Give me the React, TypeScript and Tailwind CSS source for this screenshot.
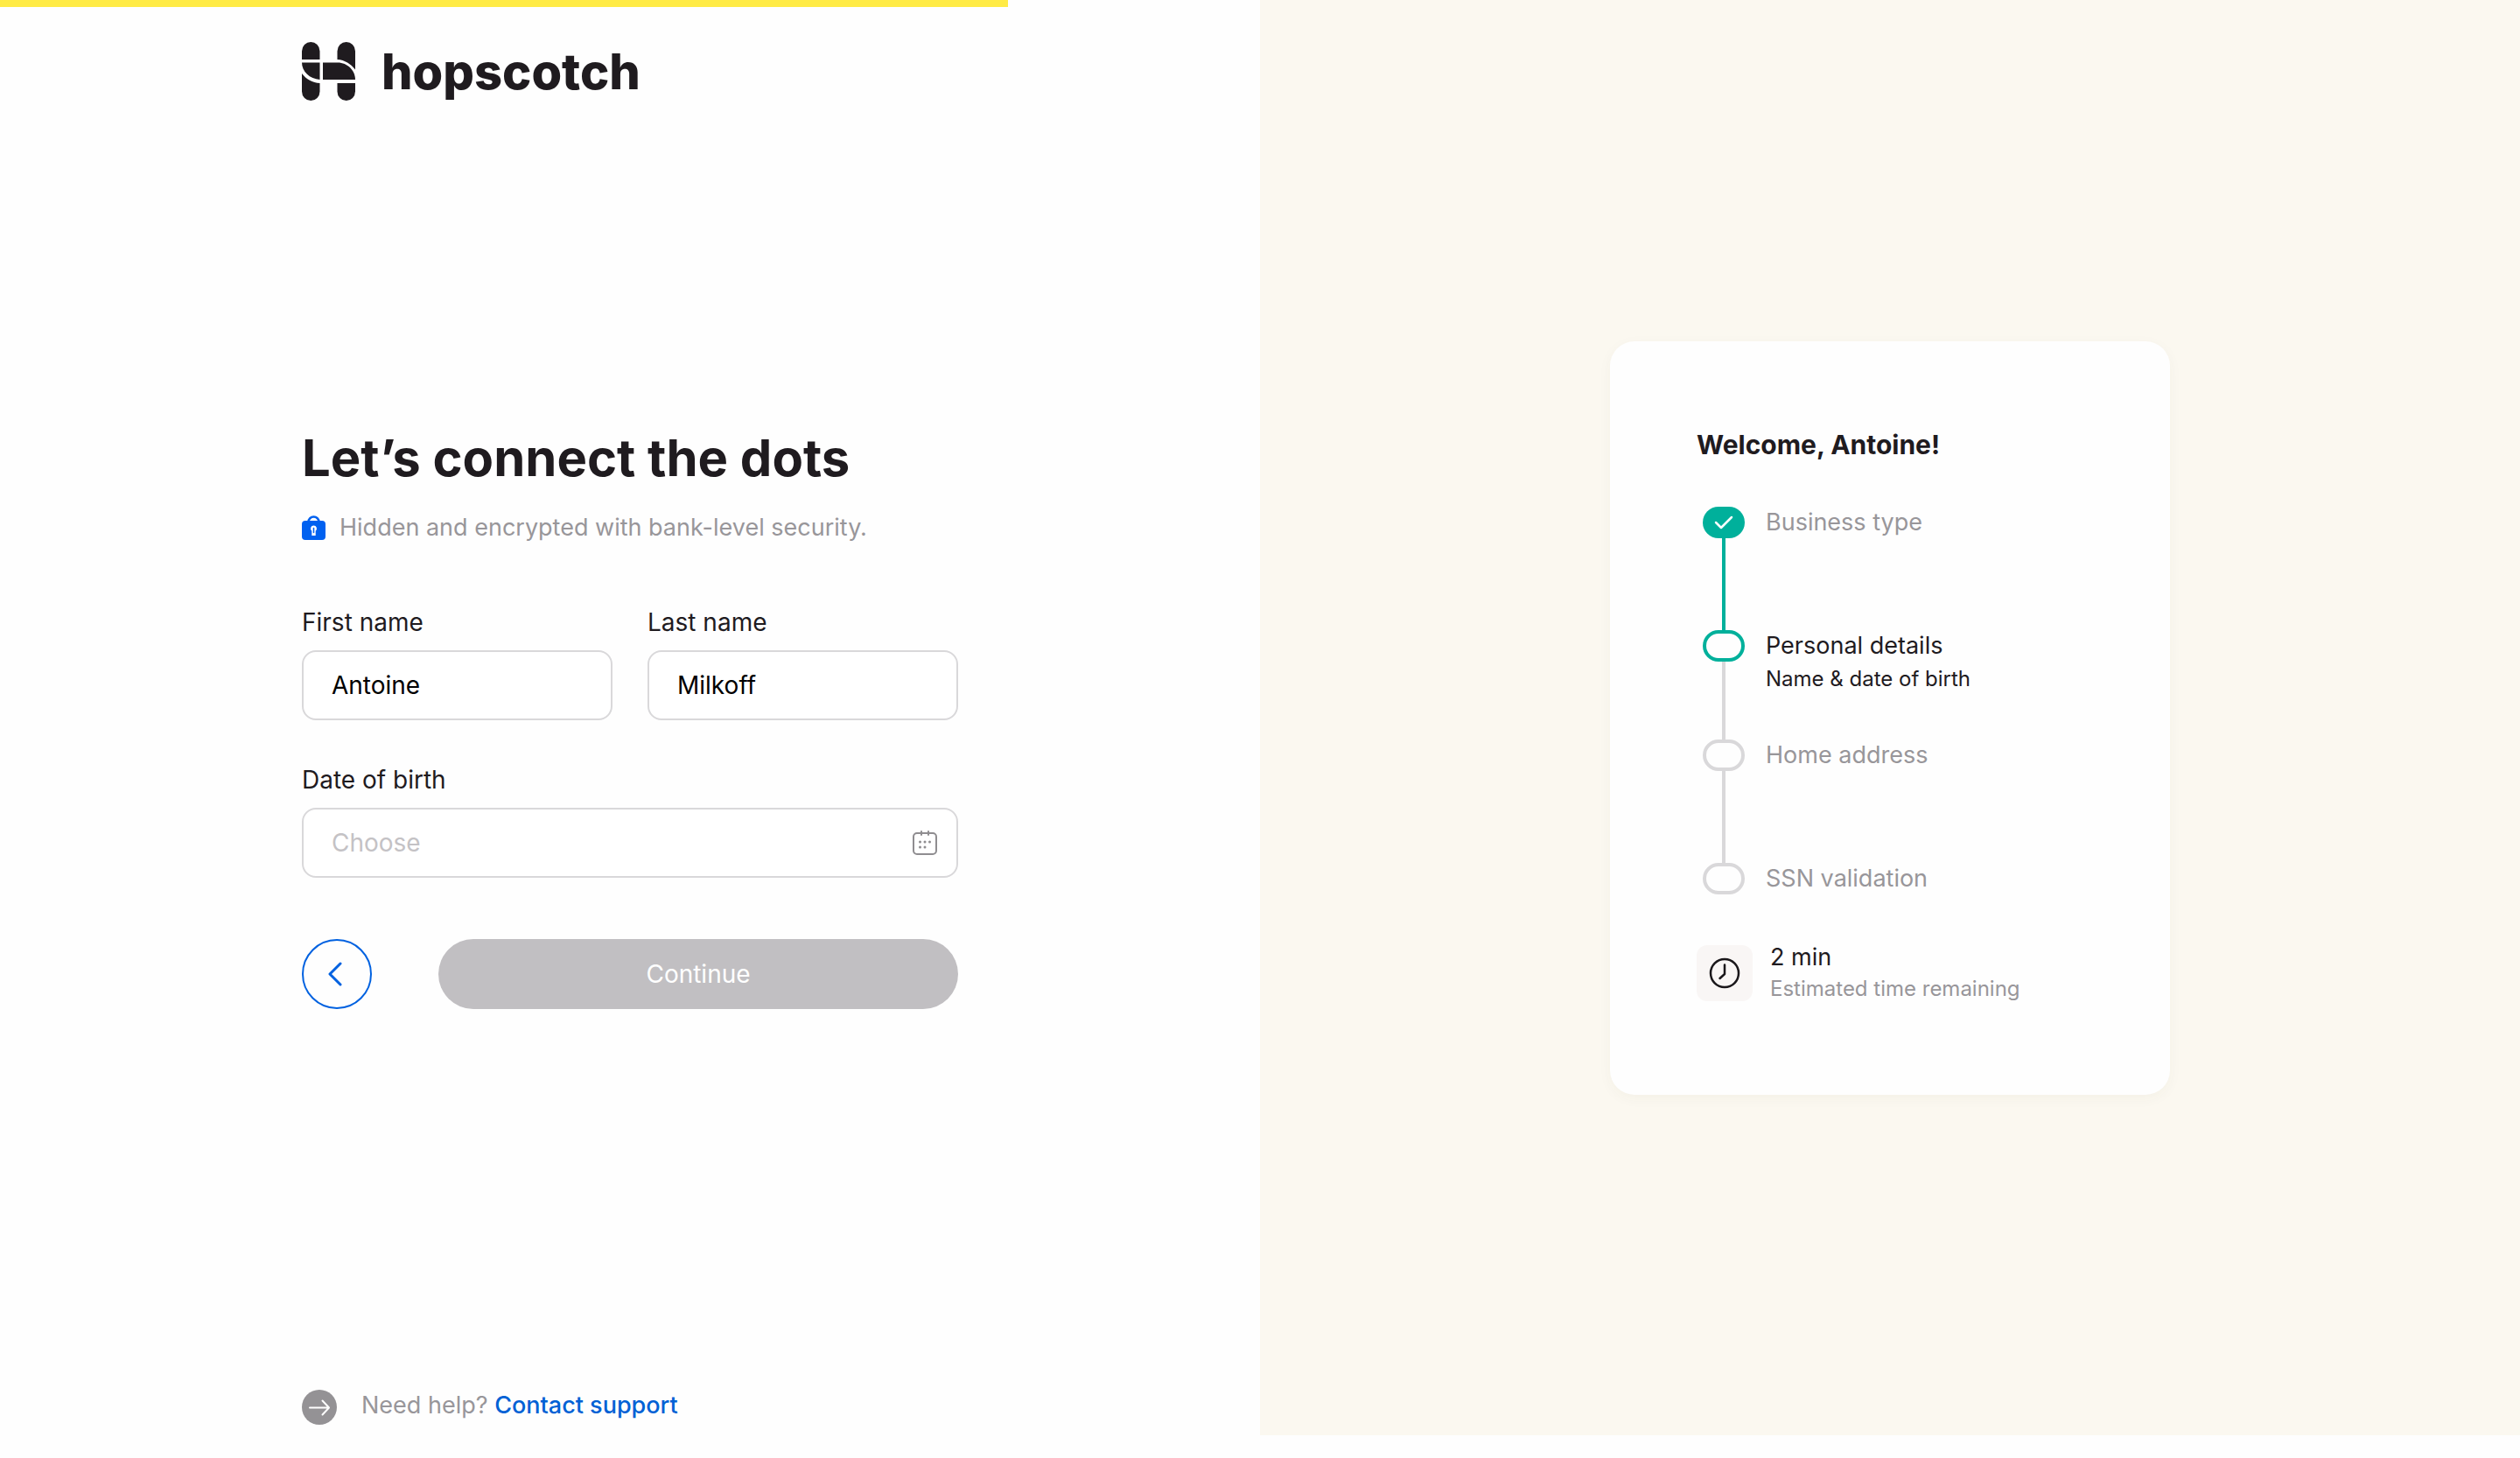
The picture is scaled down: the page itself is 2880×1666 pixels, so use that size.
import { useId, useState } from 'react';
import type { ReactNode } from 'react';

type StepState = 'done' | 'current' | 'upcoming';

interface Step {
  label: string;
  detail?: string;
  state: StepState;
}

const STEPS: Step[] = [
  { label: 'Business type', state: 'done' },
  { label: 'Personal details', detail: 'Name & date of birth', state: 'current' },
  { label: 'Home address', state: 'upcoming' },
  { label: 'SSN validation', state: 'upcoming' },
];

const PROGRESS = 40;

function LogoMark() {
  return (
    <svg viewBox="0 0 61 67" className="h-[67px] w-[61px]" fill="#1f1b1f" aria-hidden="true">
      <path d="M0 20V10.5a10.25 10.5 0 0 1 20.5 0V20Z" />
      <path d="M40.5 20V10.5a10.25 10.5 0 0 1 20.5 0V31.5C56 25 49 20.5 40.5 20Z" />
      <path d="M0 23.5h20.5V43C9 42 0 34 0 23.500Z" />
      <path d="M24 23.500H41c11 0 20 9 20 19.500H24Z" />
      <path d="M0 36c5 6.500 12 10.500 20.500 11v9.500a10.250 10.500 0 0 1-20.500 0Z" />
      <path d="M40.500 47H61v9.500a10.250 10.500 0 0 1-20.500 0Z" />
    </svg>
  );
}

function LockIcon() {
  return (
    <svg viewBox="0 0 27 30" className="h-[30px] w-[27px] shrink-0" aria-hidden="true">
      <path d="M7.500 8.500a6 6 0 0 1 12 0" fill="none" stroke="#0061f0" strokeWidth="2.500" />
      <rect x="0" y="7" width="27" height="22" rx="4" fill="#0061f0" />
      <path d="M13.500 12.500a3.500 3.500 0 0 0-2.200 6.200V24h4.400v-5.300a3.500 3.500 0 0 0-2.200-6.200Z" fill="#fff" />
      <path d="M13.500 15.500v5" stroke="#0061f0" strokeWidth="1.500" strokeLinecap="round" />
    </svg>
  );
}

function CalendarIcon() {
  return (
    <svg viewBox="0 0 28 28" className="h-7 w-7" fill="none" stroke="#8f8d90" strokeWidth="2" strokeLinecap="round" aria-hidden="true">
      <rect x="1" y="3" width="26" height="24" rx="4" />
      <path d="M10 1v4M18 1v4" />
      <path d="M8.500 13h.01M14 13h.01M19.500 13h.01M8.500 19h.01M14 19h.01" strokeWidth="3" />
    </svg>
  );
}

function Field({ label, value, placeholder, icon }: {
  label: string;
  value?: string;
  placeholder?: string;
  icon?: ReactNode;
}) {
  const id = useId();
  const [text, setText] = useState(value ?? '');

  return (
    <div className="flex min-w-0 flex-1 flex-col gap-3">
      <label htmlFor={id} className="text-[28px] leading-10">{label}</label>
      <div className="relative">
        <input
          id={id}
          value={text}
          placeholder={placeholder}
          onChange={(e) => setText(e.target.value)}
          className="h-20 w-full rounded-2xl border-2 border-[#d9d8da] bg-white px-8 text-[28px] text-black placeholder:text-[#c4c2c5]"
        />
        {icon && <span className="absolute inset-y-0 right-6 flex items-center">{icon}</span>}
      </div>
    </div>
  );
}

function StepMarker({ state }: { state: StepState }) {
  if (state === 'done') {
    return (
      <span className="flex h-9 w-12 shrink-0 items-center justify-center rounded-full bg-[#00b09b]">
        <svg viewBox="0 0 22 16" className="h-4 w-[22px]" fill="none" stroke="#fff" strokeWidth="2.500" strokeLinecap="round" strokeLinejoin="round" aria-hidden="true">
          <path d="M2 8l6 6L20 2" />
        </svg>
      </span>
    );
  }
  return (
    <span
      className={
        state === 'current'
          ? 'h-9 w-12 shrink-0 rounded-full border-4 border-[#00b09b]'
          : 'h-9 w-12 shrink-0 rounded-full border-4 border-[#d9d8da]'
      }
    />
  );
}

function StepItem({ step, last }: { step: Step; last: boolean }) {
  return (
    <li className="flex gap-6">
      <div className="flex flex-col items-center">
        <StepMarker state={step.state} />
        {!last && (
          <span className={step.state === 'done' ? 'w-1 flex-1 bg-[#00b09b]' : 'w-1 flex-1 bg-[#d9d8da]'} />
        )}
      </div>
      <div className={last ? '' : step.detail ? 'pb-[49px]' : 'pb-[105px]'}>
        <p className={step.state === 'current' ? 'text-[27px] leading-9' : 'text-[27px] leading-9 text-[#98969a]'}>
          {step.label}
        </p>
        {step.detail && <p className="text-2xl leading-10">{step.detail}</p>}
      </div>
    </li>
  );
}

export default function App() {
  return (
    <div className="relative flex min-h-screen bg-[#fefefe] font-['Inter','Liberation_Sans',sans-serif] text-[#1f1b1f]">
      <div
        role="progressbar"
        aria-label="Onboarding progress"
        aria-valuenow={PROGRESS}
        className="absolute top-0 left-0 h-2 bg-[#ffeb45]"
        style={{ width: `${PROGRESS}%` }}
      />

      <main className="flex w-1/2 flex-col px-[345px] pt-12 pb-[38px]">
        <header className="flex items-start gap-[30px]">
          <LogoMark />
          <span className="text-[56px] leading-[68px] font-extrabold">hopscotch</span>
        </header>

        <form className="my-auto flex flex-col pb-16" onSubmit={(e) => e.preventDefault()}>
          <h1 className="text-[58px] leading-[72px] font-bold">Let’s connect the dots</h1>
          <p className="mt-6 flex items-center gap-4 text-[27px] leading-10 text-[#98969a]">
            <LockIcon />
            Hidden and encrypted with bank-level security.
          </p>

          <div className="mt-[68px] flex gap-10">
            <Field label="First name" value="Antoine" />
            <Field label="Last name" value="Milkoff" />
          </div>
          <div className="mt-12 flex">
            <Field label="Date of birth" placeholder="Choose" icon={<CalendarIcon />} />
          </div>

          <div className="mt-[70px] flex gap-[76px]">
            <button
              type="button"
              aria-label="Back"
              className="flex h-20 w-20 shrink-0 items-center justify-center rounded-full border-2 border-[#0061e0]"
            >
              <svg viewBox="0 0 20 28" className="h-7 w-5" fill="none" stroke="#0061e0" strokeWidth="3" strokeLinecap="round" strokeLinejoin="round" aria-hidden="true">
                <path d="M14 2L2 14l12 12" />
              </svg>
            </button>
            <button type="submit" disabled className="h-20 flex-1 rounded-full bg-[#c1bfc2] text-[28px] text-white">
              Continue
            </button>
          </div>
        </form>

        <footer className="flex items-start gap-7 text-[27px] leading-9 text-[#98969a]">
          <svg viewBox="0 0 40 40" className="h-10 w-10" fill="none" stroke="#fff" strokeWidth="2" strokeLinecap="round" strokeLinejoin="round" aria-hidden="true">
            <circle cx="20" cy="20" r="20" fill="#949295" stroke="none" />
            <path d="M9 20.500h21M23.500 12.500l7.500 8-7.500 8" />
          </svg>
          <p>
            Need help? <a href="#support" className="font-medium text-[#0061d5]">Contact support</a>
          </p>
        </footer>
      </main>

      <aside className="mb-[26px] flex w-1/2 items-center justify-center bg-[#fbf8f0]">
        <section className="w-[640px] rounded-[28px] bg-[#fefefe] px-[99px] pt-[98px] pb-[103px] shadow-[0_4px_16px_rgba(80,70,30,0.04)]">
          <h2 className="text-3xl leading-10 font-bold">Welcome, Antoine!</h2>
          <ol className="mt-[51px] flex flex-col pl-[7px]">
            {STEPS.map((step, index) => (
              <StepItem key={step.label} step={step} last={index === STEPS.length - 1} />
            ))}
          </ol>
          <div className="mt-[54px] flex items-center gap-5">
            <span className="flex h-16 w-16 shrink-0 items-center justify-center rounded-xl bg-[#f9f6f5]">
              <svg viewBox="0 0 36 36" className="h-9 w-9" fill="none" stroke="#1a171a" strokeWidth="2.500" strokeLinecap="round" strokeLinejoin="round" aria-hidden="true">
                <circle cx="18" cy="18" r="16" />
                <path d="M18 8.500V19l-5.500 5" />
              </svg>
            </span>
            <div>
              <p className="text-[27px] leading-9">2 min</p>
              <p className="text-2xl leading-9 text-[#98969a]">Estimated time remaining</p>
            </div>
          </div>
        </section>
      </aside>
    </div>
  );
}
